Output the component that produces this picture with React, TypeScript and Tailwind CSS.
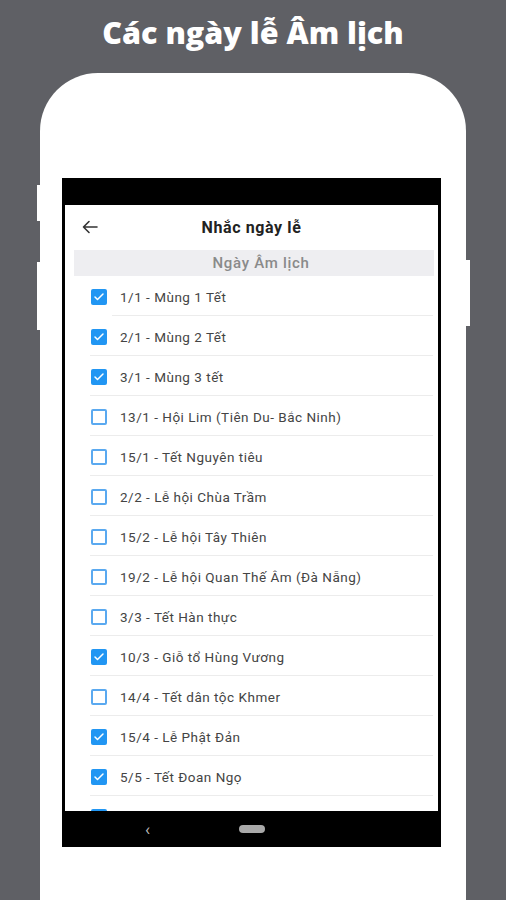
import { Check } from 'lucide-react';

interface Holiday {
  label: string;
  checked: boolean;
}

const holidays: Holiday[] = [
  { label: '1/1 - Mùng 1 Tết', checked: true },
  { label: '2/1 - Mùng 2 Tết', checked: true },
  { label: '3/1 - Mùng 3 tết', checked: true },
  { label: '13/1 - Hội Lim (Tiên Du- Bắc Ninh)', checked: false },
  { label: '15/1 - Tết Nguyên tiêu', checked: false },
  { label: '2/2 - Lễ hội Chùa Trầm', checked: false },
  { label: '15/2 - Lễ hội Tây Thiên', checked: false },
  { label: '19/2 - Lễ hội Quan Thế Âm (Đà Nẵng)', checked: false },
  { label: '3/3 - Tết Hàn thực', checked: false },
  { label: '10/3 - Giỗ tổ Hùng Vương', checked: true },
  { label: '14/4 - Tết dân tộc Khmer', checked: false },
  { label: '15/4 - Lễ Phật Đản', checked: true },
  { label: '5/5 - Tết Đoan Ngọ', checked: true },
  // row cut off by the nav bar, only the top of its box shows
  { label: '', checked: true },
];

const CheckBox = ({ checked }: { checked: boolean }) =>
  checked ? (
    <div className="w-[16px] h-[16px] rounded-[2px] bg-[#2196f3] flex items-center justify-center">
      <Check size={12} strokeWidth={3} color="white" />
    </div>
  ) : (
    <div className="w-[16px] h-[16px] rounded-[2px] border-2 border-[#5aa9f0]" />
  );

const HolidayRow = ({ item, first }: { item: Holiday; first: boolean }) => (
  <div className="relative h-[40px] flex items-center pl-[26px] shrink-0">
    <CheckBox checked={item.checked} />
    <span className="ml-[13px] text-[13.5px] text-[#444] tracking-[0.5px]">{item.label}</span>
    <div
      className={`absolute bottom-[1px] right-[5px] h-px bg-[#ececec] ${
        first ? 'left-[47px]' : 'left-[25px]'
      }`}
    />
  </div>
);

const App = () => {
  return (
    <div
      className="w-[506px] h-[900px] bg-[#5f6065] overflow-hidden flex flex-col items-center"
      style={{ fontFamily: 'Roboto, "Liberation Sans", sans-serif' }}
    >
      <h1
        className="shrink-0 pt-[11px] h-[62px] text-[30.5px] leading-[42px] font-extrabold text-white"
        style={{ fontFamily: '"Open Sans", "Noto Sans", sans-serif' }}
      >
        Các ngày lễ Âm lịch
      </h1>

      {/* phone body */}
      <div className="relative mt-[11px] w-[426px] h-[900px] shrink-0 bg-white rounded-t-[58px] pt-[105px] pl-[22px]">
        <div className="absolute left-[-3px] top-[112px] w-[3px] h-[36px] bg-white" />
        <div className="absolute left-[-3px] top-[189px] w-[3px] h-[68px] bg-white" />
        <div className="absolute right-[-4px] top-[187px] w-[4px] h-[66px] bg-white" />

        {/* screen */}
        <div className="w-[379px] bg-black px-[3px] pt-[27px]">
          <div className="h-[606px] bg-white flex flex-col overflow-hidden">
            <div className="relative h-[45px] shrink-0 flex items-center justify-center">
              <svg
                className="absolute left-[17px] top-[15px]"
                width="16"
                height="14"
                viewBox="0 0 16 14"
                fill="none"
                stroke="#333"
                strokeWidth="1.6"
                strokeLinecap="round"
                strokeLinejoin="round"
              >
                <path d="M15 7H1.5M7 1.5L1.5 7L7 12.5" />
              </svg>
              <span className="text-[16px] font-bold text-[#222] tracking-[0.6px]">Nhắc ngày lễ</span>
            </div>
            <div className="ml-[9px] mr-[4px] pl-[14px] h-[26px] shrink-0 bg-[#eeeef1] flex items-center justify-center text-[15px] font-medium text-[#8a8a8a] tracking-[0.7px]">
              Ngày Âm lịch
            </div>
            <div className="mt-[1px] flex flex-col">
              {holidays.map((item, i) => (
                <HolidayRow key={i} item={item} first={i === 0} />
              ))}
            </div>
          </div>
          <div className="h-[36px] flex items-center">
            <span className="ml-[80px] text-[#bbb] text-[17px] leading-none">‹</span>
            <div className="ml-[89px] w-[26px] h-[8px] rounded-full bg-[#a9a9a9]" />
          </div>
        </div>
      </div>
    </div>
  );
};

export default App;
